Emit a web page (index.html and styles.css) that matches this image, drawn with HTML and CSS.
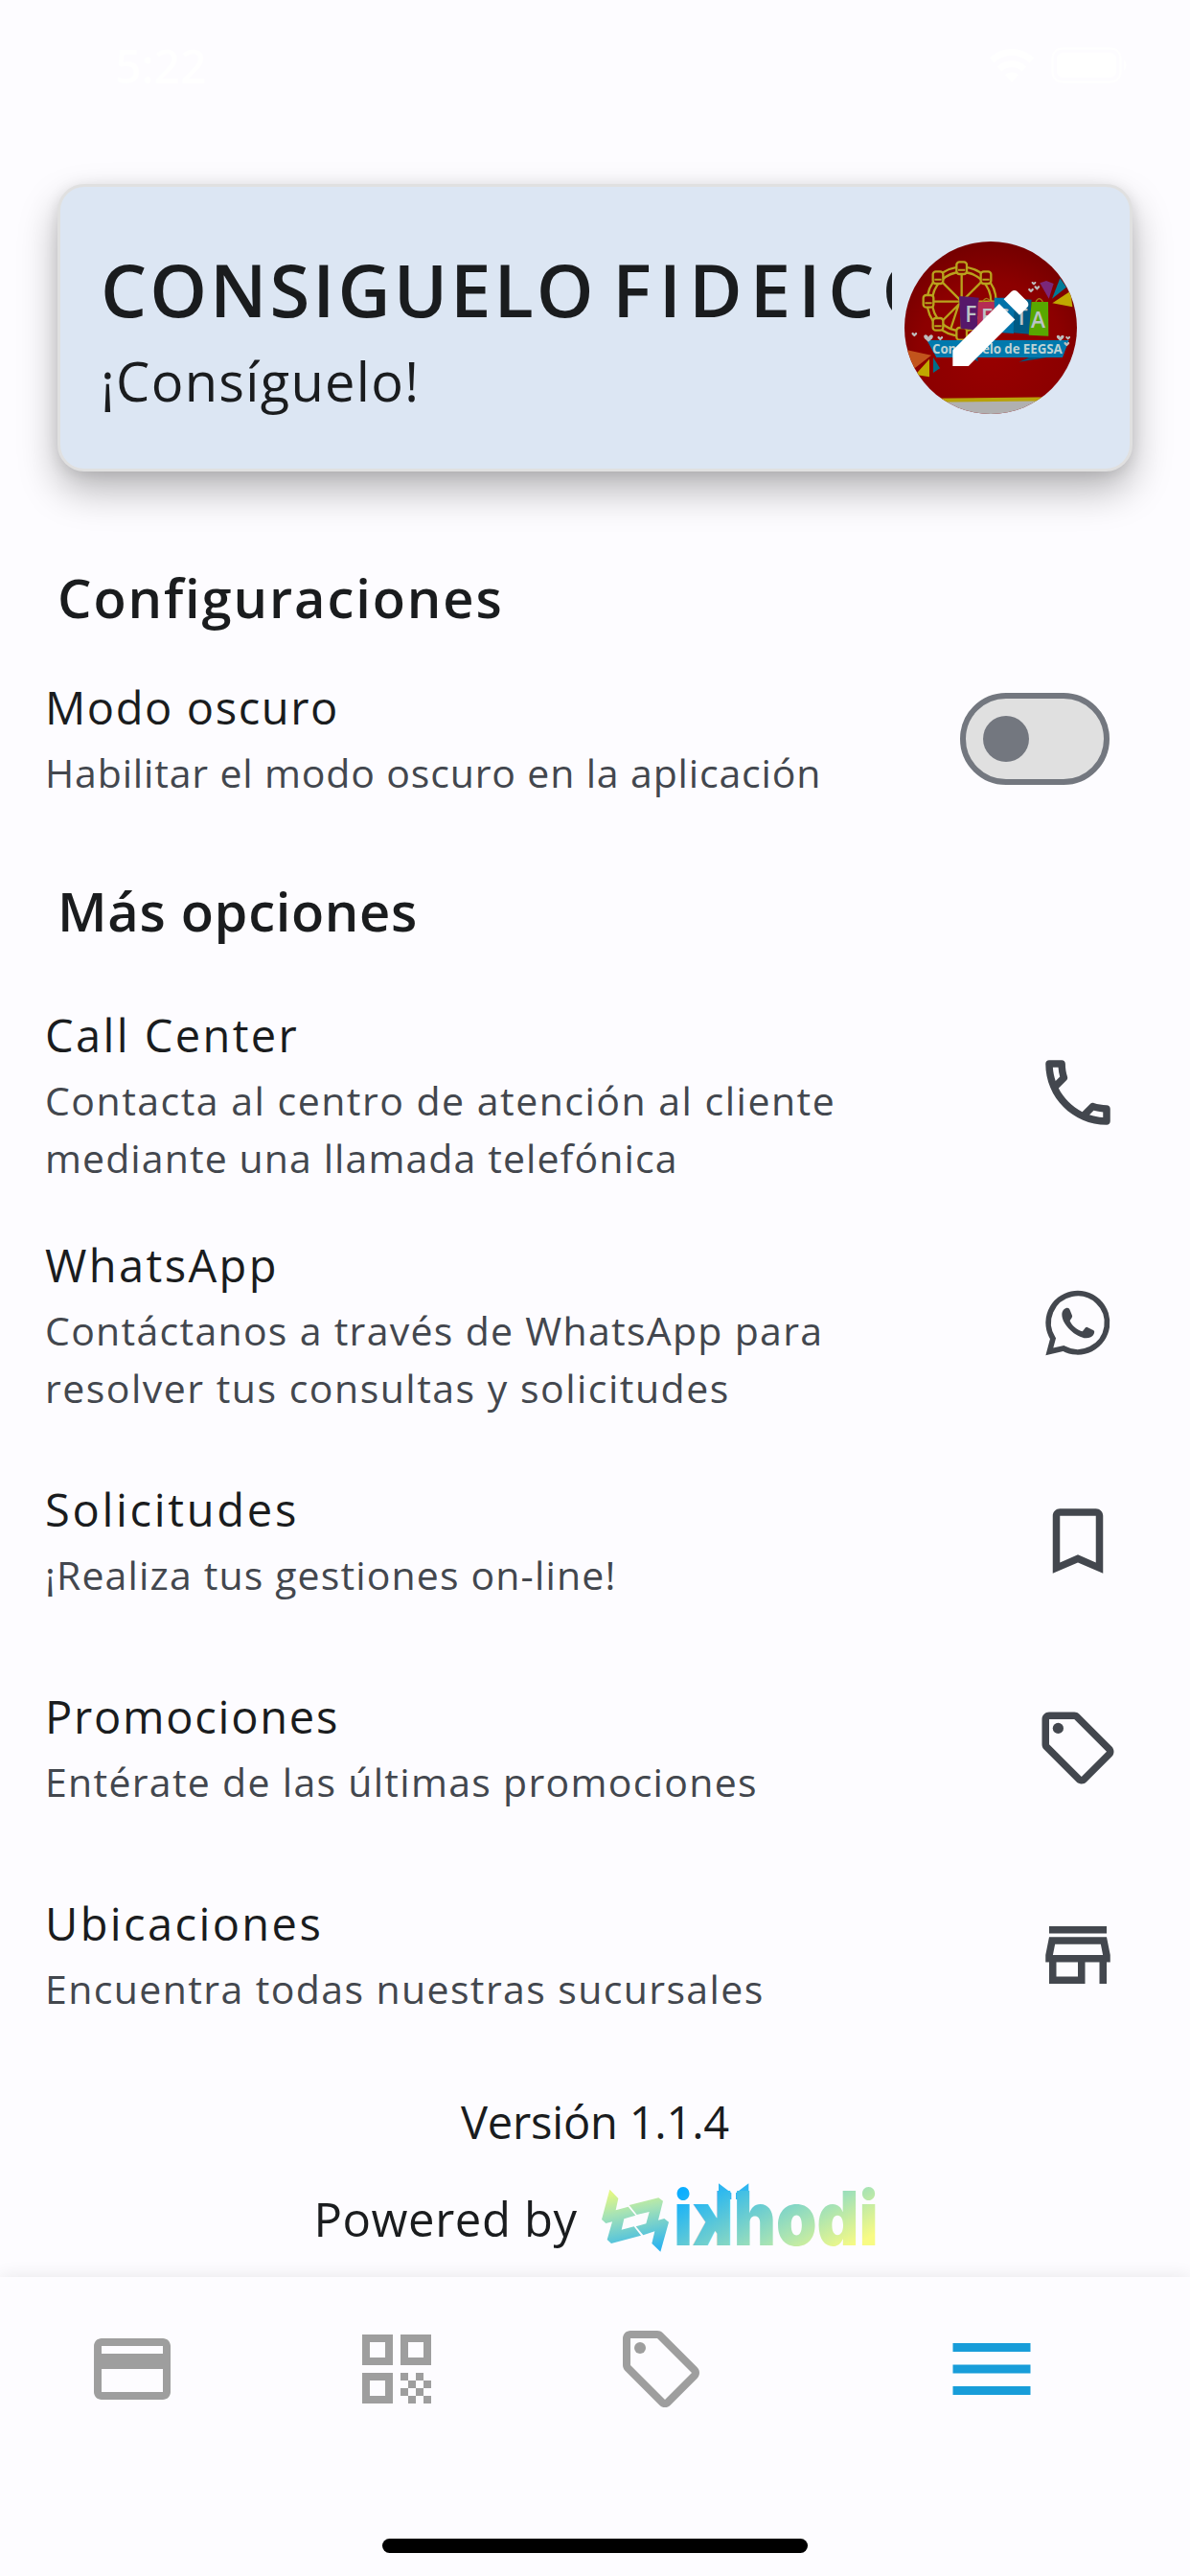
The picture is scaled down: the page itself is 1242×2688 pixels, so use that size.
FILE: index.html
```html
<!DOCTYPE html>
<html lang="es">
<head>
<meta charset="utf-8">
<meta name="viewport" content="width=device-width, initial-scale=1.0">
<title>Más opciones</title>
<link rel="stylesheet" href="styles.css">
</head>
<body>

<div class="status">
    <span class="time">5:22</span>
    <div class="status-icons">
        <svg width="48" height="38" viewBox="0 0 48 38" fill="none" stroke="#fff" stroke-width="7">
            <path d="M3 14a30 30 0 0 1 42 0M11 23a19 19 0 0 1 26 0"/>
            <path d="M24 37l-7-8a10 10 0 0 1 14 0z" fill="#fff" stroke="none"/>
        </svg>
        <svg width="82" height="38" viewBox="0 0 82 38">
            <rect x="1.5" y="1.5" width="71" height="35" rx="10" fill="none" stroke="#fff" stroke-width="2"/>
            <rect x="6" y="6" width="62" height="26" rx="6" fill="#fff"/>
            <path d="M76 13q5 6 0 12z" fill="#fff"/>
        </svg>
    </div>
</div>

<div class="content">
    <div class="card">
        <div class="card-text">
            <div class="card-title">CONSIGUELO <span>FIDEICO</span></div>
            <div class="card-subtitle">¡Consíguelo!</div>
        </div>
        <svg class="avatar" viewBox="0 0 540 540">
            <defs>
                <radialGradient id="red" cx=".5" cy=".65" r=".7">
                    <stop offset="0" stop-color="#980000"/>
                    <stop offset=".6" stop-color="#8c0000"/>
                    <stop offset="1" stop-color="#6e0000"/>
                </radialGradient>
                <clipPath id="round"><circle cx="270" cy="270" r="270"/></clipPath>
                <path id="heart" d="M0 6C-3-6-17-4-14 6C-12 12-4 16 0 20C4 16 12 12 14 6C17-4 3-6 0 6z"/>
            </defs>
            <g clip-path="url(#round)">
                <rect width="540" height="540" fill="url(#red)"/>
                <path d="M0 492l540-6v20L0 504z" fill="#b8a20a"/>
                <path d="M0 504l540-6v42H0z" fill="#b0b0b0"/>
                <!-- ferris wheel -->
                <g fill="none" stroke="#b9a31c" stroke-width="7">
                    <circle cx="179" cy="188" r="108"/>
                    <circle cx="179" cy="188" r="92"/>
                    <path d="M179 80v216M71 188h216M103 112l152 152M255 112L103 264M170 196l-26 80"/>
                </g>
                <g fill="#7e0000" stroke="#b9a31c" stroke-width="7">
                    <rect x="163" y="64" width="32" height="38" rx="9"/>
                    <rect x="89" y="94" width="32" height="38" rx="9"/>
                    <rect x="59" y="168" width="32" height="38" rx="9"/>
                    <rect x="89" y="240" width="32" height="38" rx="9"/>
                    <rect x="163" y="270" width="32" height="38" rx="9"/>
                    <rect x="239" y="94" width="32" height="38" rx="9"/>
                </g>
                <g fill="#b9a31c">
                    <path d="M168 86h22v6h-22zM94 116h22v6H94zM64 190h22v6H64zM94 262h22v6H94zM244 116h22v6h-22z"/>
                </g>
                <!-- shopping bags -->
                <path d="M171 171l62 5-6 102-51-6z" fill="#56186a"/>
                <path d="M230 190l53-2v95l-55-5z" fill="#b52d54"/>
                <path d="M281 176h66l-5 112-59-4z" fill="#0072a8"/>
                <path d="M345 178l53 4-7 108-50-4z" fill="#005a84"/>
                <path d="M398 189h52l1 107-62-3z" fill="#58a800"/>
                <path d="M245 188q12-20 24 0M411 189q11-20 22 0" fill="none" stroke="#a77a18" stroke-width="4"/>
                <g class="bag-letters">
                    <text x="190" y="253">F</text>
                    <text x="240" y="262">E</text>
                    <text x="292" y="262">S</text>
                    <text x="347" y="262">T</text>
                    <text x="396" y="269">A</text>
                </g>
                <!-- ribbon -->
                <path d="M165 340l65 36-2-30zM430 345l-72 32 100-16z" fill="#00567f"/>
                <path d="M70 309h445l-20 54H100z" fill="#0079ad"/>
                <text class="ribbon" x="87" y="351" textLength="407">Consíguelo de EEGSA</text>
                <!-- confetti -->
                <path d="M424 130l20-7 23 9-15 47z" fill="#7b2779"/>
                <path d="M487 115l20 28-45 36z" fill="#007a96"/>
                <path d="M463 193l57-38 6 50z" fill="#c0a800"/>
                <path d="M5 339l79 17-54 42z" fill="#c2541c"/>
                <path d="M78 368v56l-44-7z" fill="#c0a800"/>
                <path d="M90 363l21 34-21 14z" fill="#006e88"/>
                <g fill="#bdbdbd">
                    <use href="#heart" x="75" y="294"/>
                    <use href="#heart" transform="translate(488 295) scale(.8)"/>
                    <use href="#heart" transform="translate(31 286) scale(.6)"/>
                    <use href="#heart" transform="translate(112 298) scale(.6)"/>
                    <use href="#heart" transform="translate(396 148) scale(.6)"/>
                    <use href="#heart" transform="translate(415 140) scale(.6)"/>
                    <use href="#heart" transform="translate(405 127) scale(.5)"/>
                    <use href="#heart" transform="translate(508 316) scale(.6)"/>
                    <use href="#heart" transform="translate(512 298) scale(.5)"/>
                </g>
            </g>
            <path fill="#fff" transform="translate(111.5 113.5) scale(13.17)" d="M3 17.25V21h3.75L17.81 9.94l-3.75-3.75L3 17.25zM20.71 7.04c.39-.39.39-1.02 0-1.41l-2.34-2.34c-.39-.39-1.02-.39-1.41 0l-1.83 1.83 3.75 3.75 1.83-1.83z"/>
        </svg>
    </div>

    <h2 class="heading settings">Configuraciones</h2>
    <div class="item dark-mode">
        <div class="item-text">
            <div class="item-title">Modo oscuro</div>
            <div class="item-desc">Habilitar el modo oscuro en la aplicación</div>
        </div>
        <div class="switch"><div class="knob"></div></div>
    </div>

    <h2 class="heading more">Más opciones</h2>
    <div class="item tall call">
        <div class="item-text">
            <div class="item-title">Call Center</div>
            <div class="item-desc">Contacta al centro de atención al cliente<br><span>mediante una llamada telefónica</span></div>
        </div>
        <svg class="icon" viewBox="0 0 24 24"><path d="M6.54 5c.06.89.21 1.76.45 2.59l-1.2 1.2c-.41-1.2-.67-2.47-.76-3.79h1.51m9.86 12.02c.85.24 1.72.39 2.6.45v1.49c-1.32-.09-2.59-.35-3.8-.75l1.2-1.19M7.5 3H4c-.55 0-1 .45-1 1 0 9.39 7.61 17 17 17 .55 0 1-.45 1-1v-3.49c0-.55-.45-1-1-1-1.24 0-2.45-.2-3.57-.57-.1-.04-.21-.05-.31-.05-.26 0-.51.1-.71.29l-2.2 2.2c-2.83-1.45-5.15-3.76-6.59-6.59l2.2-2.2c.28-.28.36-.67.25-1.02C8.7 6.45 8.5 5.25 8.5 4c0-.55-.45-1-1-1z"/></svg>
    </div>
    <div class="item tall whatsapp">
        <div class="item-text">
            <div class="item-title">WhatsApp</div>
            <div class="item-desc">Contáctanos a través de WhatsApp para<br><span>resolver tus consultas y solicitudes</span></div>
        </div>
        <svg class="icon" viewBox="60 768 270 270">
            <path d="M117 953A92 92 0 1 1 150 984L106 994z" fill="none" stroke="#43474e" stroke-width="17"/>
            <path d="M145 878c0-14 10-21 17-21 4 0 6 2 8 7l7 17c2 6-6 12-7 17 4 12 22 29 38 33 6-3 9-14 15-14l20 10c5 2 4 7 2 12-4 9-14 13-24 13-32-2-76-42-76-74z"/>
        </svg>
    </div>
    <div class="item requests">
        <div class="item-text">
            <div class="item-title">Solicitudes</div>
            <div class="item-desc">¡Realiza tus gestiones on-line!</div>
        </div>
        <svg class="icon" viewBox="0 0 24 24"><path d="M17 3H7c-1.1 0-2 .9-2 2v16l7-3 7 3V5c0-1.1-.9-2-2-2zm0 15l-5-2.18L7 18V5h10v13z"/></svg>
    </div>
    <div class="item promos">
        <div class="item-text">
            <div class="item-title">Promociones</div>
            <div class="item-desc">Entérate de las últimas promociones</div>
        </div>
        <svg class="icon" viewBox="0 0 24 24"><path d="M21.41 11.58l-9-9C12.05 2.22 11.55 2 11 2H4c-1.1 0-2 .9-2 2v7c0 .55.22 1.05.59 1.42l9 9c.36.36.86.58 1.41.58s1.05-.22 1.41-.59l7-7c.37-.36.59-.86.59-1.41s-.23-1.06-.59-1.42zM13 20.01L4 11V4h7v-.01l9 9-7 7.02z"/><circle cx="6.5" cy="6.5" r="1.5"/></svg>
    </div>
    <div class="item places">
        <div class="item-text">
            <div class="item-title">Ubicaciones</div>
            <div class="item-desc">Encuentra todas nuestras sucursales</div>
        </div>
        <svg class="icon" viewBox="0 0 24 24"><path d="M18.36 9l.6 3H5.04l.6-3h12.72M20 4H4v2h16V4zm0 3H4l-1 5v2h1v6h10v-6h4v6h2v-6h1v-2l-1-5zM6 18v-4h6v4H6z"/></svg>
    </div>

    <div class="version">Versión 1.1.4</div>
    <div class="powered">
        <span>Powered by</span>
        <svg class="logo" viewBox="24 33 864 222">
            <defs>
                <linearGradient id="word" gradientUnits="userSpaceOnUse" x1="285" y1="60" x2="490" y2="419">
                    <stop offset="0" stop-color="#0caeff"/>
                    <stop offset=".35" stop-color="#60c9d6"/>
                    <stop offset=".65" stop-color="#a4e2b6"/>
                    <stop offset="1" stop-color="#f8fb84"/>
                </linearGradient>
                <linearGradient id="wordFlip" gradientUnits="userSpaceOnUse" x1="151" y1="60" x2="-54" y2="419">
                    <stop offset="0" stop-color="#0caeff"/>
                    <stop offset=".35" stop-color="#60c9d6"/>
                    <stop offset=".65" stop-color="#a4e2b6"/>
                    <stop offset="1" stop-color="#f8fb84"/>
                </linearGradient>
                <linearGradient id="mark" gradientUnits="userSpaceOnUse" x1="110" y1="56" x2="150" y2="251">
                    <stop offset="0" stop-color="#e2f785"/>
                    <stop offset=".35" stop-color="#a5e2b6"/>
                    <stop offset="1" stop-color="#2db4ef"/>
                </linearGradient>
            </defs>
            <path fill="url(#mark)" d="M52 56l27 28-8 37 39-11 23 27-36 11-8 34 39-10 22 28-93 25-13-12 16-56-20 5-13-12zM113 105l92-23 14 10-15 60 19-5 14 11-26 93-27-26 9-38-36 12-23-27 32-9 10-37-39 9z"/>
            <!-- pointed tops of the k and h stems -->
            <path fill="#2fb6f0" d="M393 37l40 30v20h-40zM487 37l-40 30v20h40z"/>
            <g class="wordmark">
                <text x="253" y="231" textLength="59" lengthAdjust="spacingAndGlyphs">i</text>
                <text class="flip" transform="translate(436 0) scale(-1 1)" x="-3" y="231" textLength="126" lengthAdjust="spacingAndGlyphs">k</text>
                <text x="440" y="231" textLength="453" lengthAdjust="spacingAndGlyphs">hodi</text>
            </g>
        </svg>
    </div>
</div>

<div class="nav">
    <div class="tabs">
        <svg class="tab" viewBox="0 0 24 24"><path d="M20 4H4c-1.11 0-1.99.89-1.99 2L2 18c0 1.11.89 2 2 2h16c1.11 0 2-.89 2-2V6c0-1.11-.89-2-2-2zm0 14H4v-6h16v6zm0-10H4V6h16v2z"/></svg>
        <svg class="tab" viewBox="0 0 24 24"><path d="M3 11h8V3H3v8zm2-6h4v4H5V5zM3 21h8v-8H3v8zm2-6h4v4H5v-4zM13 3v8h8V3h-8zm6 6h-4V5h4v4zM13 13h2v2h-2zM17 13h2v2h-2zM15 15h2v2h-2zM19 15h2v2h-2zM13 17h2v2h-2zM17 17h2v2h-2zM15 19h2v2h-2zM19 19h2v2h-2z"/></svg>
        <svg class="tab" viewBox="0 0 24 24"><path d="M21.41 11.58l-9-9C12.05 2.22 11.55 2 11 2H4c-1.1 0-2 .9-2 2v7c0 .55.22 1.05.59 1.42l9 9c.36.36.86.58 1.41.58s1.05-.22 1.41-.59l7-7c.37-.36.59-.86.59-1.41s-.23-1.06-.59-1.42zM13 20.01L4 11V4h7v-.01l9 9-7 7.02z"/><circle cx="6.5" cy="6.5" r="1.5"/></svg>
        <svg class="tab active" viewBox="0 0 24 24"><path d="M3 18h18v-2H3v2zm0-5h18v-2H3v2zm0-7v2h18V6H3z"/></svg>
    </div>
    <div class="home-bar"></div>
</div>

</body>
</html>
```
FILE: styles.css
```css
* {
    box-sizing: border-box;
}
body {
    margin: 0;
    width: 1242px;
    height: 2688px;
    display: flex;
    flex-direction: column;
    overflow: hidden;
    background: #fdfcff;
    color: #1a1c1e;
    font-family: "Open Sans", "Noto Sans", sans-serif;
}
svg {
    display: block;
    flex: none;
}
.status {
    height: 136px;
    padding: 0 63px 0 120px;
    display: flex;
    align-items: center;
    justify-content: space-between;
    color: #fff;
}
.time {
    font-size: 48px;
    font-weight: 600;
}
.status-icons {
    display: flex;
    gap: 17px;
}
.content {
    height: 2240px;
    padding-top: 56px;
}

/* profile card */
.card {
    height: 300px;
    margin: 0 60px;
    padding: 0 55px 0 42px;
    display: flex;
    align-items: center;
    justify-content: space-between;
    background: #dce6f3;
    border: 3px solid #e0e0e0;
    border-radius: 28px;
    box-shadow: 0 20px 40px rgba(0,0,0,.28), 0 3px 15px rgba(0,0,0,.1);
}
.card-text {
    width: 826px;
    overflow: hidden;
    white-space: nowrap;
}
.card-title {
    font-size: 76px;
    font-weight: 600;
    line-height: 106px;
    letter-spacing: 3px;
    word-spacing: -6px;
}
.card-title span {
    letter-spacing: 8px;
}
.card-subtitle {
    margin-top: 4px;
    font-size: 56px;
    line-height: 76px;
    letter-spacing: 1.3px;
}
.avatar {
    width: 180px;
    height: 180px;
}
.bag-letters {
    font-size: 68px;
    font-weight: 600;
    fill: #bcc4c6;
}
.ribbon {
    font-size: 40px;
    font-weight: 700;
    fill: #bdd2d4;
}

/* list */
.heading {
    margin: 0 60px;
    font-size: 56px;
    font-weight: 600;
    line-height: 84px;
}
.settings {
    margin-top: 89px;
    letter-spacing: 1.9px;
}
.more {
    margin-top: 31px;
    margin-bottom: 28px;
    letter-spacing: .7px;
}
.item {
    height: 216px;
    padding: 0 72px 0 47px;
    display: flex;
    align-items: center;
    justify-content: space-between;
}
.item-text {
    padding-bottom: 6px;
}
.tall {
    height: 240px;
}
.tall .item-text {
    padding-bottom: 0;
}
.dark-mode {
    height: 212px;
    padding-right: 84px;
}
.item-title {
    font-size: 47px;
    line-height: 76px;
    letter-spacing: 2.4px;
}
.item-desc {
    font-size: 41px;
    line-height: 60px;
    letter-spacing: 1.3px;
    color: #43474e;
}
.dark-mode .item-title {
    letter-spacing: 1.6px;
}
.dark-mode .item-desc {
    letter-spacing: .85px;
}
.call .item-desc {
    letter-spacing: 1.5px;
}
.call .item-desc span {
    letter-spacing: 1.1px;
}
.whatsapp .item-desc span {
    letter-spacing: 1.5px;
}
.requests .item-title {
    letter-spacing: 2.7px;
}
.requests .item-desc {
    letter-spacing: 1.15px;
}
.promos .item-title {
    letter-spacing: 1.75px;
}
.places .item-desc {
    letter-spacing: 1.4px;
}
.icon {
    width: 90px;
    height: 90px;
    fill: #43474e;
}
.switch {
    width: 156px;
    height: 96px;
    padding: 0 18px;
    display: flex;
    align-items: center;
    background: #e0e0e0;
    border: 6px solid #73777f;
    border-radius: 48px;
}
.knob {
    width: 48px;
    height: 48px;
    border-radius: 50%;
    background: #73777f;
}

/* footer */
.version {
    margin-top: 34px;
    font-size: 47px;
    line-height: 64px;
    letter-spacing: -.2px;
    text-align: center;
}
.powered {
    margin-top: 31px;
    display: flex;
    justify-content: center;
    gap: 24px;
    font-size: 49px;
    line-height: 76px;
    letter-spacing: .6px;
}
.logo {
    width: 288px;
    height: 74px;
    overflow: visible;
}
.wordmark {
    font-family: Inter, sans-serif;
    font-size: 236px;
    font-weight: 900;
    letter-spacing: 0;
    fill: url(#word);
}
.flip {
    fill: url(#wordFlip);
}

/* bottom bar */
.nav {
    height: 312px;
    display: flex;
    flex-direction: column;
    align-items: center;
    justify-content: space-between;
    padding-bottom: 24px;
    background: #fdfcff;
    box-shadow: 0 0 18px rgba(0,0,0,.09);
}
.tabs {
    width: 100%;
    height: 192px;
    display: grid;
    grid-template-columns: 276px 276px 276px 414px;
    align-items: center;
    justify-items: center;
}
.tab {
    width: 96px;
    height: 96px;
    fill: #9e9e9e;
}
.active {
    width: 108px;
    height: 108px;
    fill: #189dd9;
}
.home-bar {
    width: 444px;
    height: 15px;
    border-radius: 8px;
    background: #000;
}
```
